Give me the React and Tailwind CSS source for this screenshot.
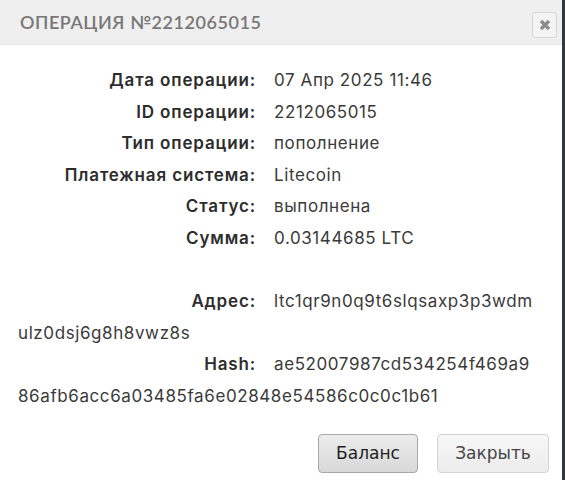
import React from "react";

const rows = [
  { label: "Дата операции:", value: "07 Апр 2025 11:46" },
  { label: "ID операции:", value: "2212065015" },
  { label: "Тип операции:", value: "пополнение" },
  { label: "Платежная система:", value: "Litecoin" },
  { label: "Статус:", value: "выполнена" },
  { label: "Сумма:", value: "0.03144685 LTC" },
];

function Label({ children }) {
  return (
    <span className="inline-block w-[238px] text-right font-semibold tracking-[0.05em] text-[#2d2d2d] mr-[18px]">
      {children}
    </span>
  );
}

export default function App() {
  return (
    <div className="w-[565px] h-[480px] bg-white border-r-[3px] border-[#2e383d] flex flex-col overflow-hidden">
      <div className="h-[45px] shrink-0 bg-[#efefef] border-b border-[#e6e6e6] flex items-center justify-between pl-[20px] pr-[5px]">
        <h1 className="font-['Lato',sans-serif] text-[18px] font-semibold tracking-[0.03em] text-[#777777] uppercase">
          Операция №2212065015
        </h1>
        <button className="mt-[5px] w-[25px] h-[26px] rounded-[3px] border border-[#d6d6d6] bg-[#f4f4f4] flex items-center justify-center">
          <svg width="12" height="12" viewBox="0 0 12 12">
            <path d="M2 2 L10 10 M10 2 L2 10" stroke="#8c8c8c" strokeWidth="3.4" />
          </svg>
        </button>
      </div>

      <div className="flex-1 pl-[18px] pr-[10px] pt-[20px] font-['Inter',sans-serif] text-[17px] tracking-[0.035em] leading-[31.6px] text-[#3a3a3a]">
        {rows.map((r) => (
          <div key={r.label}>
            <Label>{r.label}</Label>
            {r.value}
          </div>
        ))}
        <div>&nbsp;</div>
        <div>
          <Label>Адрес:</Label>
          ltc1qr9n0q9t6slqsaxp3p3wdm
          <br />
          ulz0dsj6g8h8vwz8s
        </div>
        <div>
          <Label>Hash:</Label>
          ae52007987cd534254f469a9
          <br />
          86afb6acc6a03485fa6e02848e54586c0c0c1b61
        </div>
      </div>

      <div className="shrink-0 flex justify-end gap-[19px] pr-[13px] pb-[7px] font-['DejaVu_Sans',sans-serif] text-[17px]">
        <button className="w-[100px] h-[39px] rounded-[4px] border border-[#a8a8a8] bg-gradient-to-b from-[#ececec] to-[#d9d9d9] text-[#1f1f1f]">
          Баланс
        </button>
        <button className="w-[112px] h-[39px] rounded-[4px] border border-[#d3d3d3] bg-gradient-to-b from-[#f7f7f7] to-[#ececec] text-[#454545]">
          Закрыть
        </button>
      </div>
    </div>
  );
}
